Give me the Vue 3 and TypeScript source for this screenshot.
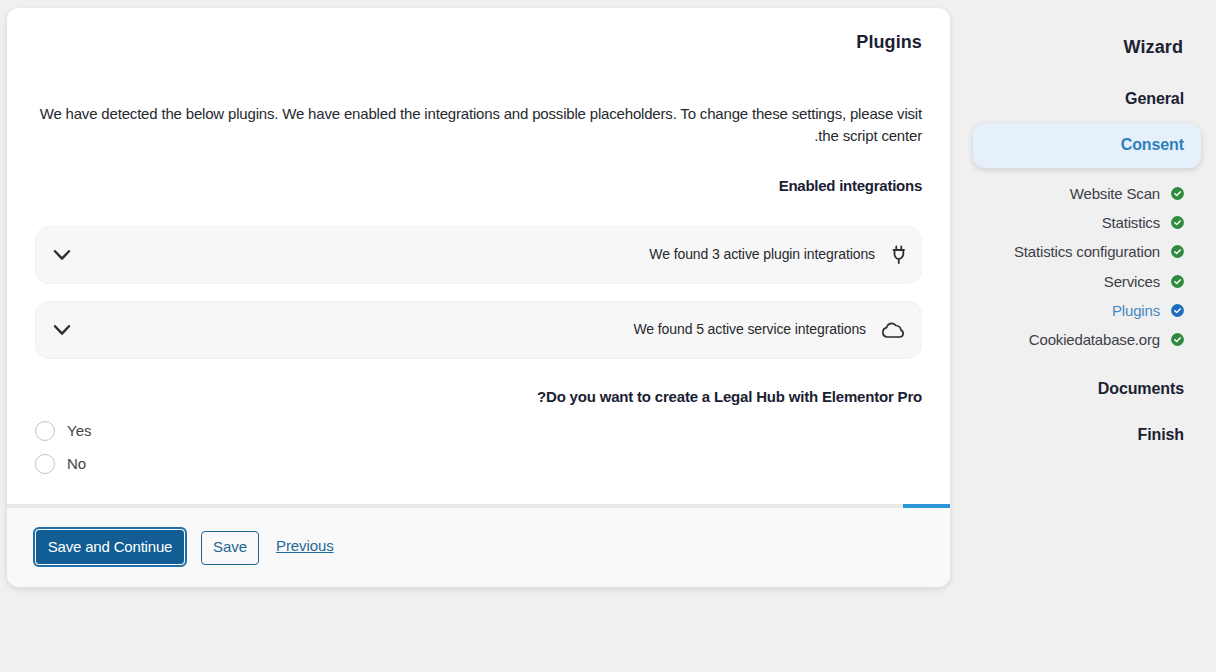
<script setup lang="ts">
interface Step { label: string; active?: boolean }
const steps: Step[] = [
  { label: 'Website Scan' },
  { label: 'Statistics' },
  { label: 'Statistics configuration' },
  { label: 'Services' },
  { label: 'Plugins', active: true },
  { label: 'Cookiedatabase.org' },
]
</script>

<template>
  <div class="page">
    <main class="card">
      <div class="body">
        <h2 class="title" dir="rtl">Plugins</h2>
        <p class="intro" dir="rtl">We have detected the below plugins. We have enabled the integrations and possible placeholders. To change these settings, please visit the script center.</p>
        <h3 class="sub" dir="rtl">Enabled integrations</h3>

        <div class="panel">
          <svg class="chev" viewBox="0 0 20 12" width="20" height="12"><path d="M3 2.2l7 7.4 7-7.4" fill="none" stroke="#2b2e33" stroke-width="2.4" stroke-linecap="round" stroke-linejoin="round" /></svg>
          <span class="panel-text">We found 3 active plugin integrations</span>
          <svg class="plug" viewBox="0 0 14 20" width="14" height="20"><path d="M5.3 1.5V5M10.3 1.5V5M2.5 5H13M3.5 5v4c0 2.6 2 5 4.3 5s4.5-2.4 4.5-5V5M7.8 14v4" fill="none" stroke="#2b2e33" stroke-width="1.8" stroke-linecap="round" stroke-linejoin="round" /></svg>
        </div>
        <div class="panel panel-two">
          <svg class="chev" viewBox="0 0 20 12" width="20" height="12"><path d="M3 2.2l7 7.4 7-7.4" fill="none" stroke="#2b2e33" stroke-width="2.4" stroke-linecap="round" stroke-linejoin="round" /></svg>
          <span class="panel-text">We found 5 active service integrations</span>
          <svg class="cloud" viewBox="0 0 22 16" width="22" height="16"><path d="M4.8 15h12.8a3.6 3.6 0 0 0 1.4-6.9A5.6 5.6 0 0 0 13.8 3.5 5.8 5.8 0 0 0 10 1.3 5.8 5.8 0 0 0 4.6 5.6 4.8 4.8 0 0 0 4.8 15z" fill="none" stroke="#2b2e33" stroke-width="1.7" stroke-linejoin="round" /></svg>
        </div>

        <h3 class="question" dir="rtl">Do you want to create a Legal Hub with Elementor Pro?</h3>
        <div class="radio"><span class="dot"></span><span>Yes</span></div>
        <div class="radio"><span class="dot"></span><span>No</span></div>
      </div>

      <div class="progress"><span class="progress-fill"></span></div>

      <footer class="footer">
        <button class="btn primary" type="button">Save and Continue</button>
        <button class="btn secondary" type="button">Save</button>
        <a class="prev" href="#" @click.prevent>Previous</a>
      </footer>
    </main>

    <aside class="side">
      <h2 class="side-title">Wizard</h2>
      <div class="main-item general">General</div>
      <div class="main-item current">Consent</div>
      <ul class="steps">
        <li v-for="s in steps" :key="s.label" class="step" :class="{ on: s.active }">
          <span>{{ s.label }}</span>
          <svg viewBox="0 0 13 13" width="13" height="13">
            <circle cx="6.5" cy="6.5" r="6.4" :fill="s.active ? '#1e6fbb' : '#2e8b3d'" />
            <path d="M3.8 6.7l1.9 1.8 3.5-3.6" fill="none" stroke="#fff" stroke-width="1.5" stroke-linecap="round" stroke-linejoin="round" />
          </svg>
        </li>
      </ul>
      <div class="main-item">Documents</div>
      <div class="main-item">Finish</div>
    </aside>
  </div>
</template>

<style>
html, body { margin: 0; background: #f0f0f0; }
</style>

<style scoped>
.page {
  display: flex;
  gap: 23px;
  align-items: flex-start;
  padding: 8px 15px 0 7px;
  height: 664px;
  overflow: hidden;
  font-family: "Liberation Sans", Arial, sans-serif;
  color: #1b2133;
  background: #f0f0f0;
}
.card {
  width: 943px;
  flex: none;
  background: #fff;
  border-radius: 12px;
  box-shadow: 0 2px 6px rgba(0, 0, 0, 0.12);
  overflow: hidden;
}
.body { height: 496px; padding: 0 28px 0 28px; box-sizing: border-box; }
.title { margin: 0; padding-top: 23px; font-size: 18px; line-height: 22px; font-weight: 700; letter-spacing: 0.1px; }
.intro { margin: 50px 0 0; font-size: 15px; line-height: 22px; color: #26292e; letter-spacing: -0.18px; }
.sub { margin: 28px 0 0; font-size: 15px; line-height: 22px; font-weight: 700; letter-spacing: -0.25px; }
.panel {
  display: flex;
  align-items: center;
  height: 58px;
  margin-top: 29px;
  padding: 0 16px;
  box-sizing: border-box;
  background: #f7f7f7;
  border: 1px solid #f2f2f2;
  border-radius: 14px;
  font-size: 14px;
  letter-spacing: -0.1px;
  color: #26292e;
}
.panel-two { margin-top: 17px; }
.chev { flex: none; }
.panel-text { margin-left: auto; padding-bottom: 2px; }
.plug { margin-left: 16px; }
.cloud { margin-left: 16px; margin-right: 1px; }
.question { margin: 27px 0 0; font-size: 15px; line-height: 22px; font-weight: 700; letter-spacing: -0.19px; }
.radio { display: flex; align-items: center; gap: 12px; height: 33px; font-size: 15px; color: #444; }
.question + .radio { margin-top: 6px; }
.dot { width: 20px; height: 20px; box-sizing: border-box; border: 1px solid #c4c4c4; border-radius: 50%; background: #fff; }
.progress { height: 3.5px; background: #e9e9e9; display: flex; justify-content: flex-end; }
.progress-fill { width: 47px; background: #2a97d8; }
.footer {
  display: flex;
  align-items: center;
  height: 79.5px;
  padding: 0 28px;
  box-sizing: border-box;
  background: #f9f9f9;
}
.btn { font: inherit; font-size: 15px; border-radius: 4px; cursor: pointer; box-sizing: border-box; padding: 0 0 2px; }
.primary {
  width: 150px;
  height: 36px;
  color: #fff;
  background: #115d94;
  border: 1px solid #fff;
  outline: 2px solid #1f6fa8;
  letter-spacing: -0.18px;
}
.secondary {
  width: 58px;
  height: 34px;
  margin: 2px 0 0 16px;
  padding-bottom: 3px;
  color: #1f6390;
  background: #f9f9f9;
  border: 1px solid #1f6390;
}
.prev { margin-left: 17px; padding-bottom: 3px; font-size: 15px; letter-spacing: -0.1px; color: #1f6a9a; text-decoration: underline; }
.side { width: 228px; flex: none; text-align: right; }
.side-title { margin: 0; padding: 28px 18px 0 0; font-size: 18px; line-height: 22px; font-weight: 700; letter-spacing: 0.1px; }
.main-item { height: 46px; line-height: 46px; padding-right: 17px; font-size: 16px; font-weight: 700; letter-spacing: -0.1px; box-sizing: border-box; }
.general { margin-top: 18px; height: 45px; line-height: 46px; }
.current {
  height: 45px;
  line-height: 43px;
  margin-top: 2px;
  color: #2e7fbb;
  background: #e5f0fa;
  border-radius: 12px;
  box-shadow: 0 2px 6px rgba(0, 0, 0, 0.14);
}
.steps { list-style: none; margin: 11px 0 0; padding: 0 17px 0 0; }
.step { display: flex; justify-content: flex-end; align-items: center; gap: 11px; height: 29.2px; font-size: 15px; letter-spacing: -0.17px; color: #3c4048; }
.step.on { color: #4588c0; }
.steps + .main-item { margin-top: 12px; }
</style>
